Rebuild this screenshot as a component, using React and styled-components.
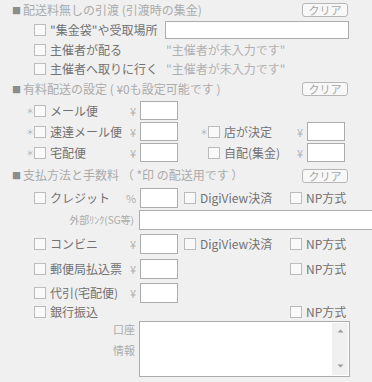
import styled, { createGlobalStyle } from "styled-components";

const GlobalStyle = createGlobalStyle`
  html, body {
    margin: 0;
    padding: 0;
    background: #f0f0f0;
    overflow: hidden;
  }
  body {
    font-family: "Noto Sans CJK JP", "Noto Sans", sans-serif;
  }
`;

const Panel = styled.div`
  width: 372px;
  display: flex;
  flex-direction: column;
`;

const Header = styled.div`
  display: flex;
  align-items: center;
  justify-content: space-between;
  height: ${(p) => p.$h}px;
  padding: 0 24px 0 12px;
`;

const Title = styled.span`
  font-size: 12px;
  line-height: 14px;
  color: #ababab;
  white-space: pre;
`;

const Square = styled.span`
  font-size: 9px;
  color: #8c8c8c;
  margin-right: 2px;
  vertical-align: 1px;
`;

const ClearButton = styled.button`
  width: 46px;
  height: 14px;
  padding: 0;
  margin: 0;
  border: 1px solid #b6b6b6;
  border-radius: 3px;
  background: #f8f8f8;
  color: #a6a6a6;
  font-family: inherit;
  font-size: 11px;
  line-height: 12px;
`;

const Row = styled.div`
  display: flex;
  align-items: ${(p) => (p.$top ? "flex-start" : "center")};
  height: ${(p) => p.$h || 20}px;
  padding-left: ${(p) => (p.$indent === undefined ? 26 : p.$indent)}px;
  margin-top: ${(p) => p.$mt || 0}px;
`;

const Mark = styled.span`
  width: 8px;
  flex: none;
  margin-left: ${(p) => p.$gap || 0}px;
  font-size: 8px;
  line-height: 14px;
  color: #b0b0b0;
`;

const Check = styled.input.attrs({ type: "checkbox" })`
  appearance: none;
  flex: none;
  width: 12px;
  height: 12px;
  margin: 0 4px 0 ${(p) => p.$gap || 0}px;
  border: 1px solid #bbbbbb;
  border-radius: 0;
  background: #f9f9f9;
  box-sizing: border-box;
`;

const Label = styled.span`
  flex: none;
  width: ${(p) => p.$w}px;
  font-size: 12px;
  line-height: 14px;
  color: #727272;
  white-space: nowrap;
`;

const Note = styled.span`
  font-size: 12px;
  line-height: 14px;
  color: #b0b0b0;
  white-space: nowrap;
`;

const Unit = styled.span`
  flex: none;
  width: 14px;
  padding-right: 4px;
  box-sizing: border-box;
  text-align: right;
  font-size: 11px;
  line-height: 12px;
  color: #b0b0b0;
`;

const Field = styled.input`
  flex: none;
  width: ${(p) => p.$w || 38}px;
  height: ${(p) => p.$h || 20}px;
  margin: 0;
  padding: 0 3px;
  box-sizing: border-box;
  border: 1px solid #acacac;
  border-radius: 0;
  background: #ffffff;
  outline: none;
`;

const Spacer = styled.span`
  flex: none;
  width: ${(p) => p.$w}px;
`;

const SubLabel = styled.span`
  flex: none;
  width: 139px;
  padding-right: ${(p) => p.$pr || 5}px;
  box-sizing: border-box;
  text-align: right;
  font-size: ${(p) => p.$size || 10}px;
  line-height: ${(p) => p.$lh || 12}px;
  color: #ababab;
  margin-top: ${(p) => p.$mt || 0}px;
  white-space: nowrap;
`;

const AccountBox = styled.div`
  flex: none;
  display: flex;
  width: 211px;
  height: 56px;
  box-sizing: border-box;
  border: 1px solid #acacac;
  background: #ffffff;
`;

const AccountText = styled.textarea`
  flex: 1;
  min-width: 0;
  margin: 0;
  padding: 2px;
  border: none;
  background: transparent;
  resize: none;
  outline: none;
  overflow: hidden;
`;

const ScrollTrack = styled.div`
  flex: none;
  width: 16px;
  margin: 1px 1px 1px 0;
  background: #f0f0f0;
  display: flex;
  flex-direction: column;
  justify-content: space-between;
  align-items: center;
  padding: 6px 0 7px;
  box-sizing: border-box;
`;

function Arrow({ down }) {
  return (
    <svg width="7" height="4" viewBox="0 0 7 4">
      <path
        d={down ? "M0.5 0.5 L3.5 3.5 L6.5 0.5 Z" : "M0.5 3.5 L3.5 0.5 L6.5 3.5 Z"}
        fill="#9a9a9a"
      />
    </svg>
  );
}

function SectionHeader({ h, children }) {
  return (
    <Header $h={h}>
      <Title>
        <Square>■</Square>
        {children}
      </Title>
      <ClearButton>クリア</ClearButton>
    </Header>
  );
}

export default function App() {
  return (
    <>
      <GlobalStyle />
      <Panel>
        <SectionHeader h={20}>配送料無しの引渡 (引渡時の集金)</SectionHeader>
        <Row $h={20} $indent={34}>
          <Check />
          <Label $w={115}>"集金袋"や受取場所</Label>
          <Field $w={184} $h={18} />
        </Row>
        <Row $h={19} $indent={34}>
          <Check />
          <Label $w={116}>主催者が配る</Label>
          <Note>"主催者が未入力です"</Note>
        </Row>
        <Row $h={19} $indent={34}>
          <Check />
          <Label $w={116}>主催者へ取りに行く</Label>
          <Note>"主催者が未入力です"</Note>
        </Row>

        <SectionHeader h={22}>有料配送の設定 ( ¥0も設定可能です )</SectionHeader>
        <Row $h={21}>
          <Mark>＊</Mark>
          <Check />
          <Label $w={76}>メール便</Label>
          <Unit>¥</Unit>
          <Field $h={19} />
        </Row>
        <Row $h={21}>
          <Mark>＊</Mark>
          <Check />
          <Label $w={76}>速達メール便</Label>
          <Unit>¥</Unit>
          <Field $h={19} />
          <Mark $gap={22}>＊</Mark>
          <Check />
          <Label $w={69}>店が決定</Label>
          <Unit>¥</Unit>
          <Field $h={19} />
        </Row>
        <Row $h={21}>
          <Mark>＊</Mark>
          <Check />
          <Label $w={76}>宅配便</Label>
          <Unit>¥</Unit>
          <Field $h={19} />
          <Mark $gap={22} />
          <Check />
          <Label $w={69}>自配(集金)</Label>
          <Unit>¥</Unit>
          <Field $h={19} />
        </Row>

        <SectionHeader h={25}>支払方法と手数料 （ *印 の配送用です ）</SectionHeader>
        <Row $h={20} $indent={34}>
          <Check />
          <Label $w={76}>クレジット</Label>
          <Unit>%</Unit>
          <Field />
          <Check $gap={6} />
          <Label $w={90}>DigiView決済</Label>
          <Check />
          <Label $w={60}>NP方式</Label>
        </Row>
        <Row $h={23} $indent={0}>
          <SubLabel>外部ﾘﾝｸ(SG等)</SubLabel>
          <Field $w={240} />
        </Row>
        <Row $h={25} $indent={34}>
          <Check />
          <Label $w={76}>コンビニ</Label>
          <Unit>¥</Unit>
          <Field />
          <Check $gap={6} />
          <Label $w={90}>DigiView決済</Label>
          <Check />
          <Label $w={60}>NP方式</Label>
        </Row>
        <Row $h={25} $indent={34}>
          <Check />
          <Label $w={76}>郵便局払込票</Label>
          <Unit>¥</Unit>
          <Field />
          <Spacer $w={112} />
          <Check />
          <Label $w={60}>NP方式</Label>
        </Row>
        <Row $h={24} $indent={34}>
          <Check />
          <Label $w={76}>代引(宅配便)</Label>
          <Unit>¥</Unit>
          <Field />
        </Row>
        <Row $h={14} $indent={34}>
          <Check />
          <Label $w={240}>銀行振込</Label>
          <Check />
          <Label $w={60}>NP方式</Label>
        </Row>
        <Row $h={56} $indent={0} $top $mt={2}>
          <SubLabel $size={11} $lh={21} $pr={4} $mt={-2}>
            口座
            <br />
            情報
          </SubLabel>
          <AccountBox>
            <AccountText />
            <ScrollTrack>
              <Arrow />
              <Arrow down />
            </ScrollTrack>
          </AccountBox>
        </Row>
      </Panel>
    </>
  );
}
